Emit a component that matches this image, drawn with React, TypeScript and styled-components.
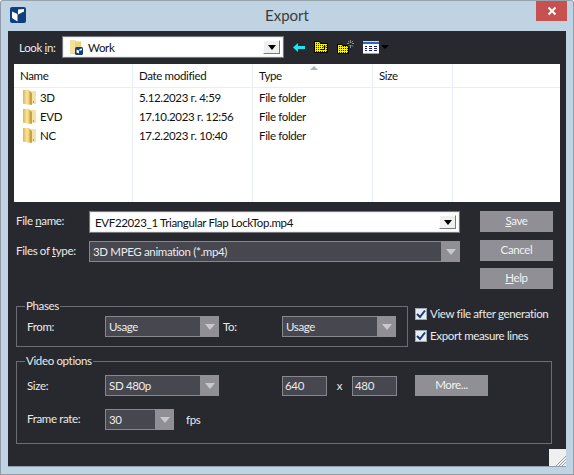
import * as React from "react";
import styled, { createGlobalStyle } from "styled-components";

const GlobalStyle = createGlobalStyle`
  html, body {
    margin: 0;
    padding: 0;
    background: #fff;
    font-family: Lato, "Liberation Sans", sans-serif;
    font-size: 11.5px;
    letter-spacing: -0.35px;
  }
  * { box-sizing: border-box; }
`;

const Window = styled.div`
  width: 574px;
  height: 475px;
  display: flex;
  flex-direction: column;
  background: #c0d3e2;
  border: 1px solid #8f9ba6;
  border-top-color: #97a3ad;
  border-radius: 3px 3px 0 0;
  padding: 0 7px 7px;
`;
const TitleBar = styled.div`
  height: 30px;
  display: grid;
  grid-template-columns: 1fr auto 1fr;
  flex: none;
`;
const LogoWrap = styled.div`
  padding: 6px 0 0 2px;
`;
const Title = styled.div`
  font-size: 15px;
  letter-spacing: 0;
  line-height: 29px;
  color: #3a3d40;
`;
const CloseButton = styled.div`
  justify-self: end;
  width: 31px;
  height: 20px;
  margin-right: -1px;
  background: #c75050;
  display: flex;
  align-items: center;
  justify-content: center;
`;
const Client = styled.div`
  position: relative;
  flex: 1;
  background: #28292e;
  padding: 5px 6px 0;
  color: #e9e9ea;
  border-bottom: 1px solid #8fa0ae;
`;
const Toolbar = styled.div`
  height: 22px;
  display: flex;
  align-items: center;
  padding-left: 5px;
`;
const LookLabel = styled.span`
  width: 43px;
  white-space: nowrap;
`;
const IconRow = styled.div`
  display: flex;
  align-items: center;
  margin-left: 9px;
  gap: 9px;
`;
const LightCombo = styled.div<{ $w: number }>`
  width: ${(p) => p.$w}px;
  height: 22px;
  display: flex;
  align-items: center;
  background: #fff;
  border: 2px solid #f0f0f0;
  outline: 1px solid #77787c;
  outline-offset: -1px;
  color: #111;
  padding: 2px;
  flex: none;
`;
const ComboText = styled.span`
  flex: 1;
  padding-left: 2px;
  white-space: nowrap;
  overflow: hidden;
`;
const LookText = styled(ComboText)`
  padding-left: 4px;
`;
const ComboButton = styled.div`
  width: 17px;
  height: 100%;
  flex: none;
  background: #f0f0f0;
  border: 1px solid #77787c;
  border-top-color: #fff;
  border-left-color: #fff;
  display: flex;
  align-items: center;
  justify-content: center;
`;
const BlackArrow = styled.div`
  width: 0;
  height: 0;
  border-left: 4px solid transparent;
  border-right: 4px solid transparent;
  border-top: 5px solid #000;
`;
const FileList = styled.div`
  position: relative;
  height: 138px;
  margin-top: 6px;
  background: #fff;
  display: flex;
  color: #111;
`;
const Column = styled.div<{ $w: number }>`
  width: ${(p) => p.$w}px;
  border-right: 1px solid #e6eef8;
  flex: none;
`;
const LastColumn = styled.div`
  flex: 1;
`;
const HeadCell = styled.div`
  height: 24px;
  line-height: 23px;
  padding-left: 6px;
  border-bottom: 1px solid #e6eef8;
`;
const Cell = styled.div`
  height: 19px;
  line-height: 19px;
  padding-left: 6px;
  display: flex;
  align-items: center;
  white-space: nowrap;
`;
const NameCell = styled(Cell)`
  padding-left: 9px;
  gap: 4px;
`;
const SortMark = styled.div`
  position: absolute;
  left: 296px;
  top: 2px;
  width: 0;
  height: 0;
  border-left: 4px solid transparent;
  border-right: 4px solid transparent;
  border-bottom: 4px solid #9db8d0;
`;
const FileArea = styled.div`
  display: flex;
  padding: 9px 0 0 2px;
`;
const FileFields = styled.div`
  width: 371px;
  flex: none;
  margin-left: 73px;
  display: flex;
  flex-direction: column;
  gap: 8px;
`;
const FileRow = styled.div`
  display: flex;
  align-items: center;
`;
const FileLabel = styled.label`
  width: 73px;
  margin-left: -73px;
  padding-bottom: 3px;
  flex: none;
`;
const ButtonColumn = styled.div`
  margin-left: 20px;
  display: flex;
  flex-direction: column;
  gap: 7px;
  width: 73px;
  & > :first-child {
    margin-bottom: 1px;
  }
`;
const Button = styled.div`
  width: 73px;
  height: 21px;
  line-height: 20px;
  background: #8f8f95;
  color: #f2f2f2;
  text-align: center;
`;
const DarkSelect = styled.div<{ $w: number }>`
  width: ${(p) => p.$w}px;
  height: 21px;
  flex: none;
  display: flex;
  background: #46474f;
  border: 1px solid #86878c;
  color: #ececed;
`;
const SelectText = styled.span`
  flex: 1;
  line-height: 19px;
  padding-left: 3px;
`;
const SelectButton = styled.div`
  width: 19px;
  flex: none;
  background: #8f8f95;
  display: flex;
  align-items: center;
  justify-content: center;
  margin: -1px -1px -1px 0;
`;
const GreyArrow = styled.div`
  width: 0;
  height: 0;
  border-left: 5px solid transparent;
  border-right: 5px solid transparent;
  border-top: 6px solid #c9c9cc;
`;
const PhasesRow = styled.div`
  display: flex;
  margin: 10px 0 0 2px;
`;
const Group = styled.fieldset<{ $w: number; $h: number }>`
  width: ${(p) => p.$w}px;
  height: ${(p) => p.$h}px;
  flex: none;
  margin: 0;
  padding: 3px 10px 0;
  border: 1px solid #6c6d73;
  min-width: 0;
`;
const GroupTitle = styled.legend`
  padding: 0 1px;
  margin-left: -2px;
  line-height: 14px;
`;
const FieldRow = styled.div`
  display: flex;
  align-items: center;
`;
const FieldLabel = styled.span`
  width: 78px;
  flex: none;
`;
const RateLabel = styled(FieldLabel)`
  padding-bottom: 2px;
`;
const ToLabel = styled.span`
  width: 63px;
  padding-left: 4px;
  flex: none;
`;
const Checks = styled.div`
  margin: 6px 0 0 7px;
  display: flex;
  flex-direction: column;
  gap: 5px;
`;
const CheckRow = styled.div`
  display: flex;
  align-items: center;
  gap: 3px;
  height: 17px;
  white-space: nowrap;
`;
const CheckBox = styled.div`
  width: 12px;
  height: 12px;
  background: #e6edf4;
  border: 1px solid #9fa7b0;
  display: flex;
  align-items: center;
  justify-content: center;
`;
const VideoGroup = styled(Group)`
  margin: 7px 0 0 2px;
  padding-top: 7px;
`;
const NumberBox = styled.div`
  width: 45px;
  height: 20px;
  line-height: 18px;
  padding-left: 2px;
  background: #46474f;
  border: 1px solid #86878c;
  flex: none;
`;
const TimesLabel = styled.span`
  width: 25px;
  text-align: center;
  flex: none;
`;
const SizeGap = styled.div`
  width: 63px;
  flex: none;
`;
const MoreButton = styled(Button)`
  margin: -1px 0 0 18px;
`;
const RateRow = styled(FieldRow)`
  margin-top: 13px;
`;
const FpsLabel = styled.span`
  margin-left: 12px;
`;
const Grip = styled.div`
  position: absolute;
  right: 0;
  bottom: 0;
  width: 17px;
  height: 17px;
  background: #efefef;
`;
const NoShrinkSvg = styled.svg`
  flex: none;
`;
const WorkIcon = styled(NoShrinkSvg)`
  margin-left: 4px;
`;
const GripSvg = styled.svg`
  position: absolute;
  right: 0;
  bottom: 0;
`;
const SmallArrow = styled.div`
  width: 0;
  height: 0;
  margin-left: -7px;
  border-left: 4px solid transparent;
  border-right: 4px solid transparent;
  border-top: 4px solid #000;
`;

const Logo = () => (
  <svg width="16" height="16" viewBox="0 0 16 16">
    <rect width="16" height="16" rx="2" fill="#0f3f7c" />
    <path d="M2 4.500 7.500 7v7.500L2 11z" fill="#fff" />
    <path d="M8 2.500 14 2v2.500L8 7.500z" fill="#fff" />
  </svg>
);

const FolderIcon = ({ id }: { id: string }) => (
  <NoShrinkSvg width="13" height="17" viewBox="0 0 13 17">
    <defs>
      <linearGradient id={id} x1="0" x2="1" y1="0" y2="0">
        <stop offset="0" stopColor="#e0b44a" />
        <stop offset="0.6" stopColor="#f7e6a2" />
        <stop offset="1" stopColor="#e9c768" />
      </linearGradient>
    </defs>
    <path d="M0 1h5l1 1h7v13H0z" fill="#f3e3a6" />
    <path d="M0 1h6.500v15L0 14.500z" fill={`url(#${id})`} />
    <path d="M6.500 2 9 4v12l-2.500-.5z" fill="#caa23e" />
    <rect x="10" y="12" width="1" height="2" fill="#69a7d8" />
  </NoShrinkSvg>
);

const WorkFolderIcon = () => (
  <WorkIcon width="14" height="15" viewBox="0 0 14 15">
    <path d="M0 0h5l1 1.500h5V14H0z" fill="#edd27c" />
    <path d="M0 0h5v12.500L0 14z" fill="#f5e09f" />
    <rect x="5" y="7" width="8" height="8" rx="1.500" fill="#0f3f7c" />
    <path d="M6.500 9.500 9 10.500V13.500L6.500 12.500zM9.500 9l2.500-.5v1.500l-2.500 1z" fill="#fff" />
  </WorkIcon>
);

const Dither = ({ id }: { id: string }) => (
  <pattern id={id} width="2" height="2" patternUnits="userSpaceOnUse">
    <rect width="2" height="2" fill="#f7f000" />
    <rect width="1" height="1" fill="#1c1c10" />
  </pattern>
);

const BackIcon = () => (
  <svg width="12" height="9" viewBox="0 0 12 9">
    <path d="M5 0v3h7v3H5v3L0 4.500z" fill="#18e6f2" />
  </svg>
);

const UpFolderIcon = () => (
  <svg width="14" height="12" viewBox="0 0 14 12">
    <defs>
      <Dither id="dither-a" />
    </defs>
    <path d="M.5 11.500V.5h5l1 2h7v9z" fill="url(#dither-a)" stroke="#000" />
    <path d="M6 8.500h4.500V5.500M9 6.500l1.500-1.500L12 6.500" fill="none" stroke="#000" />
  </svg>
);

const NewFolderIcon = () => (
  <svg width="17" height="14" viewBox="0 0 17 14">
    <defs>
      <Dither id="dither-b" />
    </defs>
    <path d="M.5 13.500V4.500h4l1 1h6v8z" fill="url(#dither-b)" stroke="#000" />
    <path d="M13.500 0v3M13.500 5v3M10 3.500h2M15 3.500h2M11 1l1.500 1.500M16 1l-1.500 1.500M11 6.500 12.500 5M16 6.500 14.500 5" stroke="#8d8d80" strokeWidth="1" />
  </svg>
);

const ViewIcon = () => (
  <svg width="16" height="13" viewBox="0 0 16 13">
    <rect width="16" height="13" fill="#fff" />
    <rect width="16" height="3" fill="#2a66c8" />
    <rect width="16" height="1" fill="#c7d6e8" />
    <path d="M2 5.500h2M6 5.500h3M11 5.500h3M2 7.500h2M6 7.500h3M11 7.500h3M2 9.500h2M6 9.500h3M11 9.500h3" stroke="#101a80" strokeWidth="1" />
    <rect y="12" width="16" height="1" fill="#9aa0b0" />
  </svg>
);

const GripMark = () => (
  <GripSvg width="11" height="11" viewBox="0 0 11 11">
    <path d="M11 1 1 11M11 4 4 11M11 7 7 11" stroke="#9aa0a6" strokeWidth="1" fill="none" />
  </GripSvg>
);

const Check = () => (
  <svg width="10" height="10" viewBox="0 0 10 10">
    <path d="M1 5 4 8 9 1.500" fill="none" stroke="#1b3c68" strokeWidth="2" />
  </svg>
);

const rows = [
  { name: "3D", date: "5.12.2023 г. 4:59" },
  { name: "EVD", date: "17.10.2023 г. 12:56" },
  { name: "NC", date: "17.2.2023 г. 10:40" },
];

const Select = ({ w, children }: { w: number; children: string }) => (
  <DarkSelect $w={w}>
    <SelectText>{children}</SelectText>
    <SelectButton>
      <GreyArrow />
    </SelectButton>
  </DarkSelect>
);

export default function App() {
  return (
    <Window>
      <GlobalStyle />
      <TitleBar>
        <LogoWrap>
          <Logo />
        </LogoWrap>
        <Title>Export</Title>
        <CloseButton>
          <svg width="10" height="10" viewBox="0 0 10 10">
            <path d="M1.500 1.500 8.500 8.500M8.500 1.500 1.500 8.500" stroke="#fff" strokeWidth="2" />
          </svg>
        </CloseButton>
      </TitleBar>
      <Client>
        <Toolbar>
          <LookLabel>
            Look <u>i</u>n:
          </LookLabel>
          <LightCombo $w={222}>
            <WorkFolderIcon />
            <LookText>Work</LookText>
            <ComboButton>
              <BlackArrow />
            </ComboButton>
          </LightCombo>
          <IconRow>
            <BackIcon />
            <UpFolderIcon />
            <NewFolderIcon />
            <ViewIcon />
            <SmallArrow />
          </IconRow>
        </Toolbar>
        <FileList>
          <Column $w={119}>
            <HeadCell>Name</HeadCell>
            {rows.map((r) => (
              <NameCell key={r.name}>
                <FolderIcon id={`folder-${r.name}`} />
                {r.name}
              </NameCell>
            ))}
          </Column>
          <Column $w={120}>
            <HeadCell>Date modified</HeadCell>
            {rows.map((r) => (
              <Cell key={r.name}>{r.date}</Cell>
            ))}
          </Column>
          <Column $w={120}>
            <HeadCell>Type</HeadCell>
            {rows.map((r) => (
              <Cell key={r.name}>File folder</Cell>
            ))}
          </Column>
          <Column $w={80}>
            <HeadCell>Size</HeadCell>
          </Column>
          <LastColumn>
            <HeadCell />
          </LastColumn>
          <SortMark />
        </FileList>
        <FileArea>
          <FileFields>
            <FileRow>
              <FileLabel>
                File <u>n</u>ame:
              </FileLabel>
              <LightCombo $w={371}>
                <ComboText>EVF22023_1 Triangular Flap LockTop.mp4</ComboText>
                <ComboButton>
                  <BlackArrow />
                </ComboButton>
              </LightCombo>
            </FileRow>
            <FileRow>
              <FileLabel>
                Files of <u>t</u>ype:
              </FileLabel>
              <Select w={371}>3D MPEG animation (*.mp4)</Select>
            </FileRow>
          </FileFields>
          <ButtonColumn>
            <Button>
              <u>S</u>ave
            </Button>
            <Button>Cancel</Button>
            <Button>
              <u>H</u>elp
            </Button>
          </ButtonColumn>
        </FileArea>
        <PhasesRow>
          <Group $w={392} $h={48}>
            <GroupTitle>Phases</GroupTitle>
            <FieldRow>
              <FieldLabel>From:</FieldLabel>
              <Select w={114}>Usage</Select>
              <ToLabel>To:</ToLabel>
              <Select w={114}>Usage</Select>
            </FieldRow>
          </Group>
          <Checks>
            <CheckRow>
              <CheckBox>
                <Check />
              </CheckBox>
              View file after generation
            </CheckRow>
            <CheckRow>
              <CheckBox>
                <Check />
              </CheckBox>
              Export measure lines
            </CheckRow>
          </Checks>
        </PhasesRow>
        <VideoGroup $w={536} $h={90}>
          <GroupTitle>Video options</GroupTitle>
          <FieldRow>
            <FieldLabel>Size:</FieldLabel>
            <Select w={114}>SD 480p</Select>
            <SizeGap />
            <NumberBox>640</NumberBox>
            <TimesLabel>x</TimesLabel>
            <NumberBox>480</NumberBox>
            <MoreButton>More...</MoreButton>
          </FieldRow>
          <RateRow>
            <RateLabel>Frame rate:</RateLabel>
            <Select w={69}>30</Select>
            <FpsLabel>fps</FpsLabel>
          </RateRow>
        </VideoGroup>
        <Grip>
          <GripMark />
        </Grip>
      </Client>
    </Window>
  );
}
